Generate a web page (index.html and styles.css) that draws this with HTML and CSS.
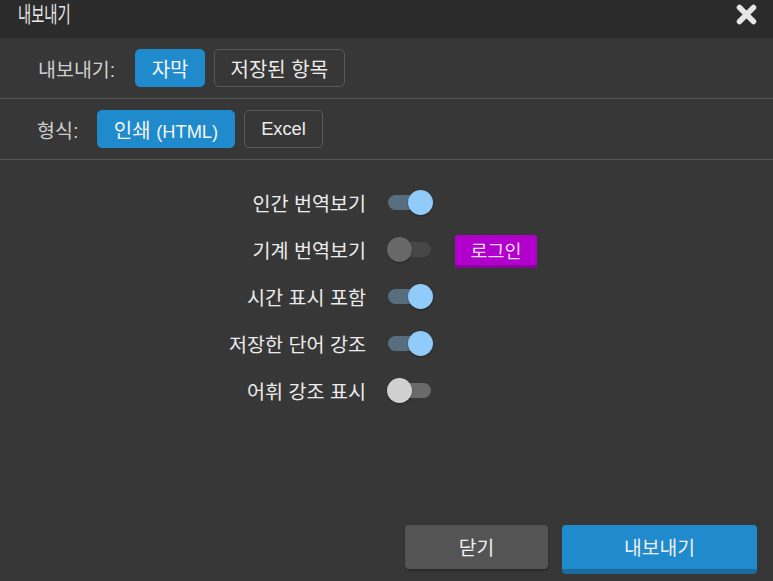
FILE: index.html
```html
<!DOCTYPE html>
<html lang="ko">
<head>
<meta charset="utf-8">
<link rel="stylesheet" href="styles.css">
</head>
<body>
<div class="dialog">
  <header class="titlebar">
    <span class="title">내보내기</span>
    <button class="close" aria-label="닫기">
      <svg width="21" height="21" viewBox="0 0 21 21"><path d="M3.5 3.5 L17.5 17.5 M17.5 3.5 L3.5 17.5" stroke="#e6e6e6" stroke-width="5.5" stroke-linecap="round"/></svg>
    </button>
  </header>
  <section class="option-row">
    <span class="option-label">내보내기:</span>
    <div class="choices">
      <button class="choice active">자막</button>
      <button class="choice">저장된 항목</button>
    </div>
  </section>
  <section class="option-row">
    <span class="option-label">형식:</span>
    <div class="choices">
      <button class="choice active">인쇄 <span class="latin">(HTML)</span></button>
      <button class="choice latin">Excel</button>
    </div>
  </section>
  <section class="toggles">
    <div class="toggle-row">
      <span class="toggle-label">인간 번역보기</span>
      <span class="switch on"><span class="track"></span><span class="thumb"></span></span>
    </div>
    <div class="toggle-row">
      <span class="toggle-label">기계 번역보기</span>
      <span class="switch disabled"><span class="track"></span><span class="thumb"></span></span>
      <button class="login">로그인</button>
    </div>
    <div class="toggle-row">
      <span class="toggle-label">시간 표시 포함</span>
      <span class="switch on"><span class="track"></span><span class="thumb"></span></span>
    </div>
    <div class="toggle-row">
      <span class="toggle-label">저장한 단어 강조</span>
      <span class="switch on"><span class="track"></span><span class="thumb"></span></span>
    </div>
    <div class="toggle-row">
      <span class="toggle-label">어휘 강조 표시</span>
      <span class="switch off"><span class="track"></span><span class="thumb"></span></span>
    </div>
  </section>
  <footer class="actions">
    <button class="btn btn-close">닫기</button>
    <button class="btn btn-export">내보내기</button>
  </footer>
</div>
</body>
</html>
```

FILE: styles.css
```css
html, body {
  margin: 0;
  padding: 0;
  background: #373737;
}
body {
  width: 773px;
  height: 581px;
  overflow: hidden;
  font-family: "Liberation Sans", "Noto Sans CJK KR", sans-serif;
  color: #eeeeee;
}
button {
  font-family: inherit;
  cursor: pointer;
}
.dialog {
  display: flex;
  flex-direction: column;
  height: 581px;
}
.titlebar {
  height: 38px;
  background: #2b2b2b;
  display: flex;
  justify-content: space-between;
  align-items: flex-start;
  box-sizing: border-box;
  padding: 0 16px 0 18px;
}
.title {
  display: inline-block;
  font-size: 22px;
  line-height: 29px;
  color: #e8e8e8;
  transform: scaleX(0.65);
  transform-origin: left center;
}
.close {
  border: 0;
  background: none;
  padding: 0;
  margin-top: 4px;
  width: 21px;
  height: 21px;
  display: block;
}
.close svg { display: block; }

.option-row {
  display: flex;
  align-items: center;
  padding: 11px 0 11px 38px;
  border-bottom: 1px solid #565656;
}
.option-label {
  font-size: 19.5px;
  color: #cfcfcf;
  margin-right: 20px;
}
.option-row + .option-row .option-label { margin-left: -1px; margin-right: 19px; }
.choices {
  display: flex;
  gap: 9px;
}
.choice {
  height: 38px;
  box-sizing: border-box;
  padding: 0 15.5px;
  border: 1px solid #5a5a5a;
  border-radius: 5px;
  background: transparent;
  color: #ececec;
  font-size: 20px;
}
.latin { font-size: 18.3px; }
.choice.latin { padding: 0 16.5px; }
.choice.active {
  background: #1f8bcd;
  border-color: #1f8bcd;
  color: #f4f4f4;
}

.toggles {
  flex: 1;
  padding-top: 19px;
}
.toggle-row {
  display: flex;
  align-items: center;
  height: 47px;
}
.toggle-label {
  width: 366px;
  text-align: right;
  font-size: 19.6px;
  color: #ececec;
  margin-right: 21px;
}
.switch {
  position: relative;
  width: 46px;
  height: 25px;
  flex: none;
}
.track {
  position: absolute;
  left: 1px;
  right: 2px;
  top: 5px;
  height: 15px;
  border-radius: 8px;
}
.thumb {
  position: absolute;
  top: 0;
  width: 25px;
  height: 25px;
  border-radius: 50%;
  box-shadow: 0 1px 2px rgba(0,0,0,0.35);
}
.switch.on .track { background: #566e80; }
.switch.on .thumb { left: 21px; background: #90cbfa; }
.switch.disabled .track { background: #474747; }
.switch.disabled .thumb { left: 0; background: #686868; }
.switch.off .track { background: #6a6a6a; }
.switch.off .thumb { left: 0; background: #d0d0d0; }

.login {
  margin-left: 22px;
  height: 33px;
  box-sizing: border-box;
  width: 82px;
  border: 0;
  border-bottom: 3px solid #8a009c;
  border-radius: 3px;
  background: #b200cc;
  color: #f5dcf8;
  font-size: 18.5px;
  padding: 0;
  margin-top: 3px;
}

.actions {
  display: flex;
  justify-content: flex-end;
  align-items: flex-start;
  gap: 14px;
  padding: 0 16px 7px 0;
  height: 49px;
  box-sizing: content-box;
}
.btn {
  border: 0;
  border-radius: 4px;
  font-size: 19.3px;
  color: #efefef;
  padding: 0;
  box-sizing: border-box;
}
.btn-close {
  width: 143px;
  height: 44px;
  background: #545454;
  box-shadow: 0 2px 2px rgba(0,0,0,0.25);
}
.btn-export {
  width: 195px;
  height: 49px;
  background: #1f8bcd;
  border-bottom: 5px solid #1a6ba0;
}
```
